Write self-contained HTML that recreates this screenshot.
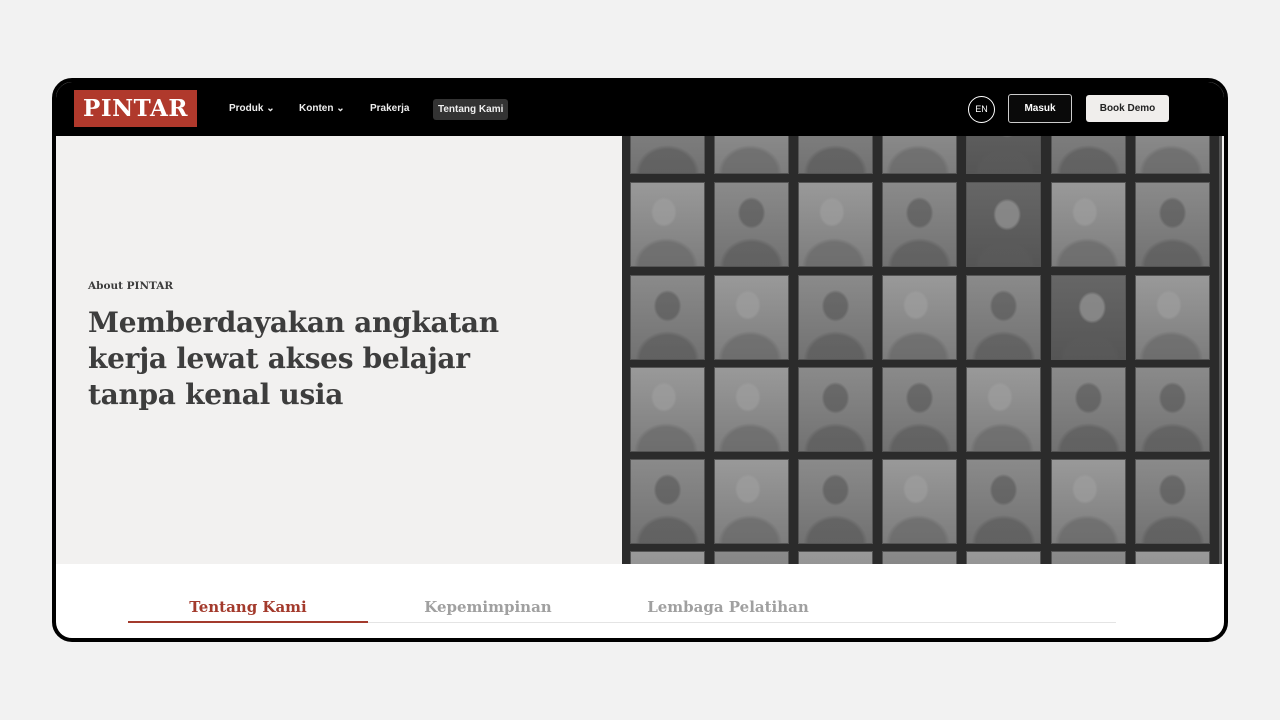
<!DOCTYPE html>
<html><head><meta charset="utf-8"><style>
*{margin:0;padding:0;box-sizing:border-box}
body{width:1280px;height:720px;background:#f2f2f2;position:relative;overflow:hidden;font-family:"Liberation Sans",sans-serif}
.frame{position:absolute;left:52px;top:78px;width:1176px;height:564px;border:4px solid #000;border-radius:20px;overflow:hidden;background:#fff}
.nav{position:absolute;left:0;top:0;width:100%;height:54px;background:#000;z-index:5}
.logo{position:absolute;left:18px;top:8px;width:123px;height:37px;background:#b0392c;color:#fff;font-family:"DejaVu Serif",serif;font-weight:bold;font-size:23px;text-align:center;line-height:37px;letter-spacing:0.5px}
.ni{position:absolute;top:17px;color:#eee;font-size:10px;font-weight:bold;line-height:20px}
.tk{background:#333;border-radius:3px;padding:0 5px;top:17px;height:21px;line-height:21px}
.en{position:absolute;left:912px;top:14px;width:27px;height:27px;border:1.5px solid #fff;border-radius:50%;color:#fff;font-size:9px;text-align:center;line-height:24px}
.btn{position:absolute;font-size:10px;font-weight:bold;text-align:center;border-radius:3px}
.hero{position:absolute;left:0;top:54px;width:100%;height:428px;background:#f2f1f0}
.grid{position:absolute;left:566px;top:0;width:600px;height:428px;background:#2b2b2b;overflow:hidden}
.strip{position:absolute;right:0;top:0;width:3px;height:100%;background:#555}
.c{position:absolute;width:75px;height:85px;border:1px solid #555;
background:radial-gradient(ellipse 14px 16px at 50% 36%,rgba(70,70,70,.45) 80%,transparent 100%),radial-gradient(ellipse 32px 28px at 50% 100%,rgba(80,80,80,.5) 85%,transparent 100%),linear-gradient(#8a8a8a,#727272)}
.c.b{background:radial-gradient(ellipse 13px 15px at 45% 35%,rgba(160,160,160,.6) 80%,transparent 100%),radial-gradient(ellipse 32px 28px at 48% 100%,rgba(100,100,100,.6) 85%,transparent 100%),linear-gradient(#999,#7d7d7d)}
.c.d{background:radial-gradient(ellipse 14px 16px at 55% 38%,rgba(160,160,160,.6) 80%,transparent 100%),radial-gradient(ellipse 30px 26px at 52% 100%,rgba(90,90,90,.7) 85%,transparent 100%),linear-gradient(#666,#555)}
.t{position:absolute;left:32px;font-family:"DejaVu Serif",serif;color:#3d3d3d}
.tab{position:absolute;top:516px;width:240px;text-align:center;font-family:"DejaVu Serif",serif;font-size:15px;font-weight:bold;color:#a0a0a0}
</style></head><body>
<div class="frame">
 <div class="nav">
  <div class="logo">PINTAR</div>
  <div class="ni" style="left:173px">Produk &#8964;</div>
  <div class="ni" style="left:243px">Konten &#8964;</div>
  <div class="ni" style="left:314px">Prakerja</div>
  <div class="ni tk" style="left:377px">Tentang Kami</div>
  <div class="en">EN</div>
  <div class="btn" style="left:952px;top:12px;width:64px;height:29px;border:1px solid #ccc;color:#fff;line-height:27px;background:#0a0a0a">Masuk</div>
  <div class="btn" style="left:1030px;top:13px;width:83px;height:27px;background:#f0eeec;color:#222;line-height:27px">Book Demo</div>
 </div>
 <div class="hero">
  <div class="t" style="top:144px;font-size:10.5px;font-weight:bold">About PINTAR</div>
  <div class="t" style="top:169px;font-size:28px;font-weight:bold;line-height:36px;letter-spacing:-0.3px">Memberdayakan angkatan<br>kerja lewat akses belajar<br>tanpa kenal usia</div>
  <div class="grid">
   <div class="c" style="left:8px;top:-47px"></div><div class="c b" style="left:92px;top:-47px"></div><div class="c" style="left:176px;top:-47px"></div><div class="c b" style="left:260px;top:-47px"></div><div class="c d" style="left:344px;top:-47px"></div><div class="c" style="left:429px;top:-47px"></div><div class="c b" style="left:513px;top:-47px"></div>
   <div class="c b" style="left:8px;top:46px"></div><div class="c" style="left:92px;top:46px"></div><div class="c b" style="left:176px;top:46px"></div><div class="c" style="left:260px;top:46px"></div><div class="c d" style="left:344px;top:46px"></div><div class="c b" style="left:429px;top:46px"></div><div class="c" style="left:513px;top:46px"></div>
   <div class="c" style="left:8px;top:139px"></div><div class="c b" style="left:92px;top:139px"></div><div class="c" style="left:176px;top:139px"></div><div class="c b" style="left:260px;top:139px"></div><div class="c" style="left:344px;top:139px"></div><div class="c d" style="left:429px;top:139px"></div><div class="c b" style="left:513px;top:139px"></div>
   <div class="c b" style="left:8px;top:231px"></div><div class="c b" style="left:92px;top:231px"></div><div class="c" style="left:176px;top:231px"></div><div class="c" style="left:260px;top:231px"></div><div class="c b" style="left:344px;top:231px"></div><div class="c" style="left:429px;top:231px"></div><div class="c" style="left:513px;top:231px"></div>
   <div class="c" style="left:8px;top:323px"></div><div class="c b" style="left:92px;top:323px"></div><div class="c" style="left:176px;top:323px"></div><div class="c b" style="left:260px;top:323px"></div><div class="c" style="left:344px;top:323px"></div><div class="c b" style="left:429px;top:323px"></div><div class="c" style="left:513px;top:323px"></div>
   <div class="c b" style="left:8px;top:415px"></div><div class="c" style="left:92px;top:415px"></div><div class="c b" style="left:176px;top:415px"></div><div class="c" style="left:260px;top:415px"></div><div class="c b" style="left:344px;top:415px"></div><div class="c" style="left:429px;top:415px"></div><div class="c b" style="left:513px;top:415px"></div>
   <div class="strip"></div>
  </div>
 </div>
 <div class="tab" style="left:72px;color:#a33a2c">Tentang Kami</div>
 <div class="tab" style="left:312px">Kepemimpinan</div>
 <div class="tab" style="left:552px">Lembaga Pelatihan</div>
 <div style="position:absolute;left:72px;top:540px;width:988px;height:1px;background:#e4e4e4"></div>
 <div style="position:absolute;left:72px;top:539px;width:240px;height:2px;background:#a33a2c"></div>
</div>
</body></html>
